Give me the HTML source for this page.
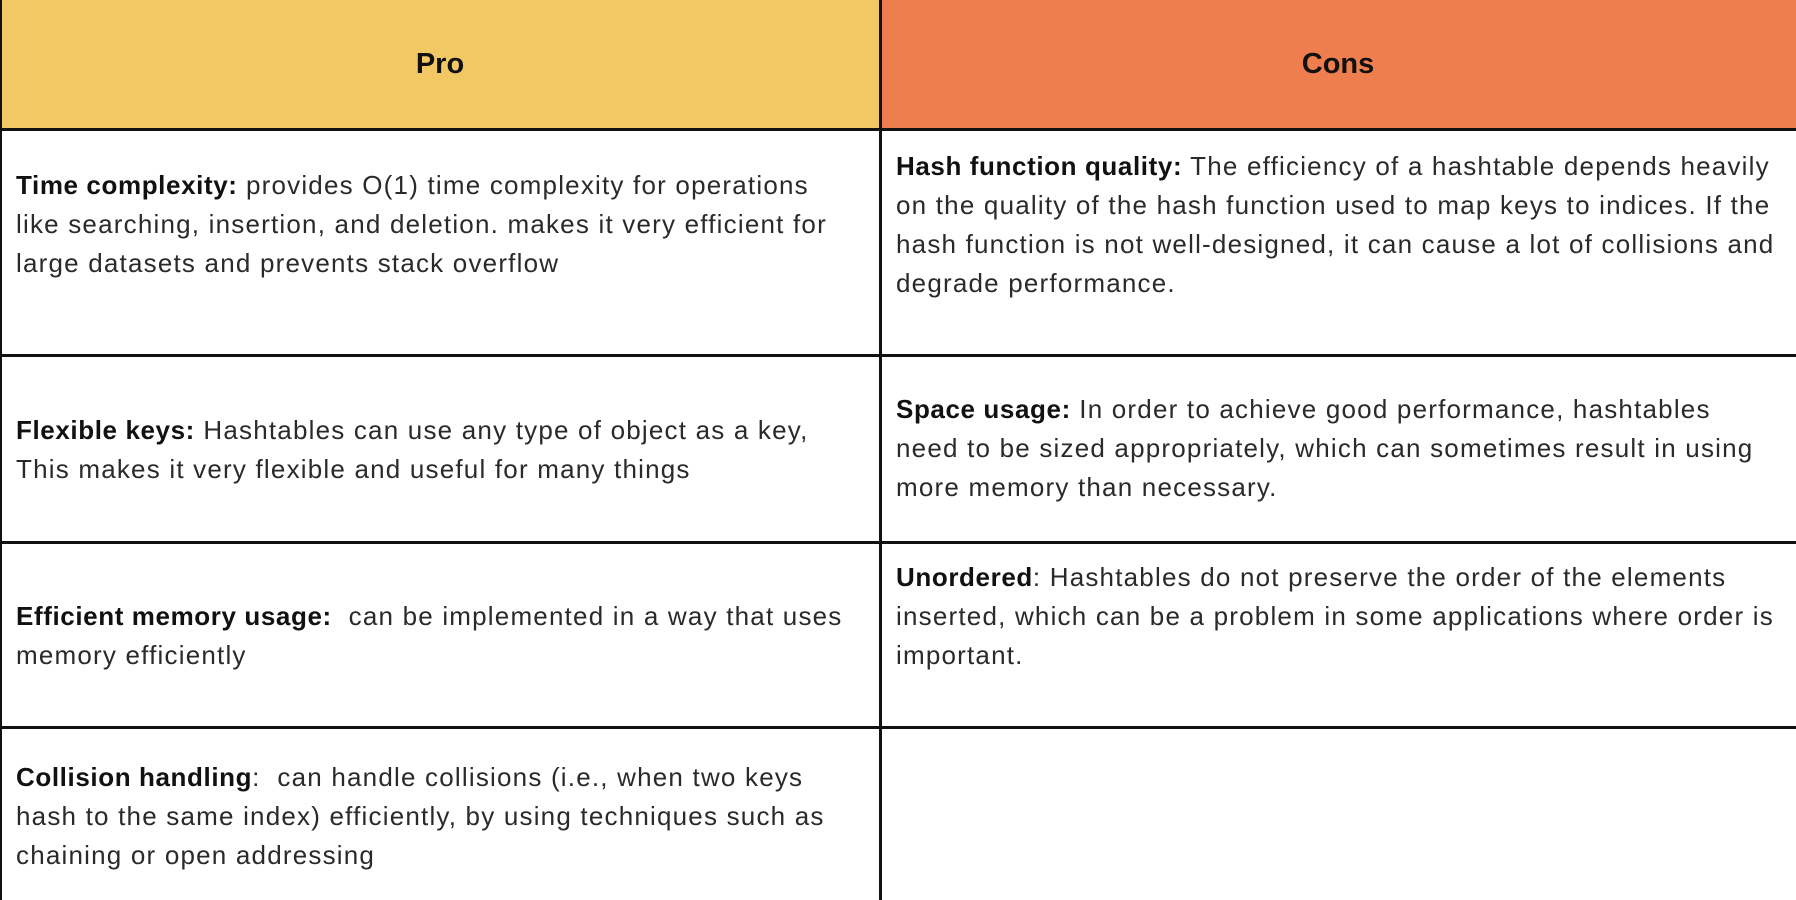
<!DOCTYPE html>
<html><head><meta charset="utf-8"><style>
html,body{margin:0;padding:0;background:#fff;}
body{width:1796px;height:900px;position:relative;overflow:hidden;font-family:"Liberation Sans",sans-serif;color:#2a2a2a;}
.h{position:absolute;top:0;height:129px;}
.hl{position:absolute;background:#111;}
.t{position:absolute;font-size:26px;letter-spacing:1.2px;line-height:39px;white-space:nowrap;}
.t b{color:#111;letter-spacing:0.6px;}
.hd{position:absolute;top:0;height:129px;line-height:129px;text-align:center;font-weight:bold;font-size:29px;color:#111;}
</style></head><body>
<div class="h" style="left:0;width:880px;background:#F2C865"></div>
<div class="h" style="left:880px;width:916px;background:#EF7E4F"></div>
<div class="hd" style="left:0;width:880px">Pro</div>
<div class="hd" style="left:880px;width:916px">Cons</div>
<div class="hl" style="left:0;top:0;width:2px;height:900px"></div>
<div class="hl" style="left:879px;top:0;width:3px;height:900px"></div>
<div class="hl" style="left:0;top:128px;width:1796px;height:3px"></div>
<div class="hl" style="left:0;top:354px;width:1796px;height:3px"></div>
<div class="hl" style="left:0;top:541px;width:1796px;height:3px"></div>
<div class="hl" style="left:0;top:726px;width:1796px;height:3px"></div>

<div class="t" style="left:16px;top:166px"><b>Time complexity:</b> provides O(1) time complexity for operations<br>like searching, insertion, and deletion. makes it very efficient for<br>large datasets and prevents stack overflow</div>
<div class="t" style="left:896px;top:147px"><b>Hash function quality:</b> The efficiency of a hashtable depends heavily<br>on the quality of the hash function used to map keys to indices. If the<br>hash function is not well-designed, it can cause a lot of collisions and<br>degrade performance.</div>

<div class="t" style="left:16px;top:411px"><b>Flexible keys:</b> Hashtables can use any type of object as a key,<br>This makes it very flexible and useful for many things</div>
<div class="t" style="left:896px;top:390px"><b>Space usage:</b> In order to achieve good performance, hashtables<br>need to be sized appropriately, which can sometimes result in using<br>more memory than necessary.</div>

<div class="t" style="left:16px;top:597px"><b>Efficient memory usage:</b>&nbsp; can be implemented in a way that uses<br>memory efficiently</div>
<div class="t" style="left:896px;top:558px"><b>Unordered</b>: Hashtables do not preserve the order of the elements<br>inserted, which can be a problem in some applications where order is<br>important.</div>

<div class="t" style="left:16px;top:758px"><b>Collision handling</b>:&nbsp; can handle collisions (i.e., when two keys<br>hash to the same index) efficiently, by using techniques such as<br>chaining or open addressing</div>
</body></html>
